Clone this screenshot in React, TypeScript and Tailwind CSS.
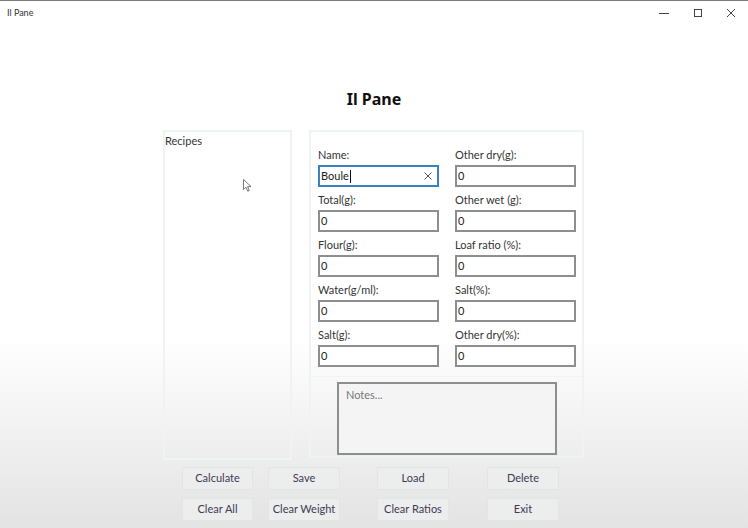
import React from 'react';

const font = { fontFamily: 'Lato, "Noto Sans", sans-serif' };
const heading = { fontFamily: '"Noto Sans", "Open Sans", sans-serif' };

function Field({ label, value, focused }: { label: string; value: string; focused?: boolean }) {
  return (
    <div className="flex flex-col">
      <div className="h-[14px] text-[11px] leading-[14px] text-[#333]">{label}</div>
      <div
        className={
          'mt-[3px] flex h-[22px] w-[121px] items-center border-2 bg-white pl-[1px] text-[11px] text-[#222] ' +
          (focused ? 'border-[#3b82c4]' : 'border-[#8e8e8e]')
        }
      >
        <span>{value}</span>
        {focused && <span className="ml-[1px] h-[13px] w-px bg-[#111]" />}
        {focused && (
          <svg className="ml-auto mr-[5px]" width="8" height="8" viewBox="0 0 8 8">
            <path d="M0.5 0.5L7.5 7.5M7.5 0.5L0.5 7.5" stroke="#555" strokeWidth="1" />
          </svg>
        )}
      </div>
    </div>
  );
}

function Btn({ label, className }: { label: string; className: string }) {
  return (
    <div
      className={
        'flex h-[23px] items-center justify-center border border-[#dfe6e6] bg-[#ededed] text-[11px] text-[#3d3b55] ' +
        className
      }
    >
      {label}
    </div>
  );
}

export default function App() {
  const left = [
    ['Name:', 'Boule'],
    ['Total(g):', '0'],
    ['Flour(g):', '0'],
    ['Water(g/ml):', '0'],
    ['Salt(g):', '0'],
  ];
  const right = [
    ['Other dry(g):', '0'],
    ['Other wet (g):', '0'],
    ['Loaf ratio (%):', '0'],
    ['Salt(%):', '0'],
    ['Other dry(%):', '0'],
  ];

  return (
    <div
      className="relative flex h-[528px] w-[748px] flex-col overflow-hidden border-t border-[#7c7c7c] bg-[linear-gradient(to_bottom,#ffffff_0%,#ffffff_64%,#e3e3e3_100%)]"
      style={font}
    >
      {/* title bar */}
      <div className="flex h-[24px] items-center pl-[7px]">
        <span className="text-[9px] text-[#333]">Il Pane</span>
        <div className="ml-auto flex items-center">
          <svg width="10" height="10" viewBox="0 0 10 10" className="mr-[24px]">
            <path d="M0 5.5H10" stroke="#444" strokeWidth="1" />
          </svg>
          <svg width="10" height="10" viewBox="0 0 10 10" className="mr-[23px]">
            <rect x="1.5" y="1.5" width="7" height="7" fill="none" stroke="#444" strokeWidth="1" />
          </svg>
          <svg width="10" height="10" viewBox="0 0 10 10" className="mr-[12px]">
            <path d="M1 1L9 9M9 1L1 9" stroke="#444" strokeWidth="1" />
          </svg>
        </div>
      </div>

      <h1 className="mt-[63px] text-center text-[16px] font-bold leading-[22px] text-[#111]" style={heading}>
        Il Pane
      </h1>

      <div className="mt-[20px] flex pl-[163px]">
        <div className="h-[330px] w-[129px] border-2 border-[#eef3f3] pt-[1px] text-[11px] text-[#333]">Recipes</div>
        <div className="ml-[17px] flex h-[328px] w-[275px] flex-col border-2 border-[#eef3f3] pt-[16px]">
          <div className="flex gap-[16px] border-b border-[#f1f4f4] pb-[9px] pl-[7px]">
            <div className="flex flex-col gap-[6px]">
              {left.map(([l, v], i) => (
                <Field key={l} label={l} value={v} focused={i === 0} />
              ))}
            </div>
            <div className="flex flex-col gap-[6px]">
              {right.map(([l, v]) => (
                <Field key={l} label={l} value={v} />
              ))}
            </div>
          </div>
          <div className="ml-[26px] mt-[5px] h-[73px] w-[220px] border-2 border-[#8e8e8e] bg-[#f4f4f4] px-[7px] pt-[3px] text-[11px] text-[#777]">
            Notes...
          </div>
        </div>
      </div>

      <div className="mt-[7px] flex">
        <Btn label="Calculate" className="ml-[182px] w-[71px]" />
        <Btn label="Save" className="ml-[15px] w-[72px]" />
        <Btn label="Load" className="ml-[37px] w-[72px]" />
        <Btn label="Delete" className="ml-[38px] w-[72px]" />
      </div>
      <div className="mt-[8px] flex">
        <Btn label="Clear All" className="ml-[182px] w-[71px]" />
        <Btn label="Clear Weight" className="ml-[15px] w-[72px]" />
        <Btn label="Clear Ratios" className="ml-[37px] w-[72px]" />
        <Btn label="Exit" className="ml-[38px] w-[72px]" />
      </div>

      {/* mouse pointer */}
      <svg className="absolute left-[243px] top-[178px]" width="9" height="13" viewBox="0 0 9 13">
        <path d="M0.5 0.5V10.5L3 8.2L4.8 12.2L6.3 11.5L4.6 7.6H8L0.5 0.5Z" fill="#fff" stroke="#555" strokeWidth="0.8" />
      </svg>
    </div>
  );
}
